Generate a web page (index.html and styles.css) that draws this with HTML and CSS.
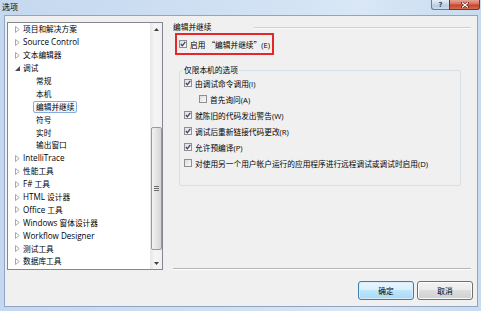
FILE: index.html
```html
<!DOCTYPE html>
<html lang="zh-CN">
<head>
<meta charset="utf-8">
<title>选项</title>
<link rel="stylesheet" href="styles.css">
</head>
<body>
<div class="window">
  <div class="titlebar">
    <span class="title">选项</span>
    <div class="caption">
      <div class="cbtn help">?</div>
      <div class="cbtn close">
        <svg width="8" height="6" viewBox="0 0 8 6"><path d="M1 0.5 L7 5.5 M7 0.5 L1 5.5" stroke="#5a1a12" stroke-width="2.4" stroke-linecap="square"/><path d="M1 0.5 L7 5.5 M7 0.5 L1 5.5" stroke="#fff" stroke-width="1.2"/></svg>
      </div>
    </div>
  </div>
  <div class="frame">
    <div class="client">
      <div class="main">
        <div class="tree">
          <ul class="items">
            <li class="row l0"><span class="tw"><svg width="5" height="7" viewBox="0 0 5 7"><path d="M0.5 0.5 L4.2 3.5 L0.5 6.5 Z" fill="#fff" stroke="#a8a8a8"/></svg></span><span class="lbl">项目和解决方案</span></li>
            <li class="row l0"><span class="tw"><svg width="5" height="7" viewBox="0 0 5 7"><path d="M0.5 0.5 L4.2 3.5 L0.5 6.5 Z" fill="#fff" stroke="#a8a8a8"/></svg></span><span class="lbl"><span class="en">Source Control</span></span></li>
            <li class="row l0"><span class="tw"><svg width="5" height="7" viewBox="0 0 5 7"><path d="M0.5 0.5 L4.2 3.5 L0.5 6.5 Z" fill="#fff" stroke="#a8a8a8"/></svg></span><span class="lbl">文本编辑器</span></li>
            <li class="row l0"><span class="tw"><svg width="5" height="5" viewBox="0 0 5 5"><path d="M5 0 L5 5 L0 5 Z" fill="#4a4a4a"/></svg></span><span class="lbl">调试</span></li>
            <li class="row l1"><span class="lbl">常规</span></li>
            <li class="row l1"><span class="lbl">本机</span></li>
            <li class="row l1"><span class="lbl sel">编辑并继续</span></li>
            <li class="row l1"><span class="lbl">符号</span></li>
            <li class="row l1"><span class="lbl">实时</span></li>
            <li class="row l1"><span class="lbl">输出窗口</span></li>
            <li class="row l0"><span class="tw"><svg width="5" height="7" viewBox="0 0 5 7"><path d="M0.5 0.5 L4.2 3.5 L0.5 6.5 Z" fill="#fff" stroke="#a8a8a8"/></svg></span><span class="lbl"><span class="en">IntelliTrace</span></span></li>
            <li class="row l0"><span class="tw"><svg width="5" height="7" viewBox="0 0 5 7"><path d="M0.5 0.5 L4.2 3.5 L0.5 6.5 Z" fill="#fff" stroke="#a8a8a8"/></svg></span><span class="lbl">性能工具</span></li>
            <li class="row l0"><span class="tw"><svg width="5" height="7" viewBox="0 0 5 7"><path d="M0.5 0.5 L4.2 3.5 L0.5 6.5 Z" fill="#fff" stroke="#a8a8a8"/></svg></span><span class="lbl"><span class="en">F# </span>工具</span></li>
            <li class="row l0"><span class="tw"><svg width="5" height="7" viewBox="0 0 5 7"><path d="M0.5 0.5 L4.2 3.5 L0.5 6.5 Z" fill="#fff" stroke="#a8a8a8"/></svg></span><span class="lbl"><span class="en">HTML </span>设计器</span></li>
            <li class="row l0"><span class="tw"><svg width="5" height="7" viewBox="0 0 5 7"><path d="M0.5 0.5 L4.2 3.5 L0.5 6.5 Z" fill="#fff" stroke="#a8a8a8"/></svg></span><span class="lbl"><span class="en">Office </span>工具</span></li>
            <li class="row l0"><span class="tw"><svg width="5" height="7" viewBox="0 0 5 7"><path d="M0.5 0.5 L4.2 3.5 L0.5 6.5 Z" fill="#fff" stroke="#a8a8a8"/></svg></span><span class="lbl"><span class="en">Windows </span>窗体设计器</span></li>
            <li class="row l0"><span class="tw"><svg width="5" height="7" viewBox="0 0 5 7"><path d="M0.5 0.5 L4.2 3.5 L0.5 6.5 Z" fill="#fff" stroke="#a8a8a8"/></svg></span><span class="lbl"><span class="en">Workflow Designer</span></span></li>
            <li class="row l0"><span class="tw"><svg width="5" height="7" viewBox="0 0 5 7"><path d="M0.5 0.5 L4.2 3.5 L0.5 6.5 Z" fill="#fff" stroke="#a8a8a8"/></svg></span><span class="lbl">测试工具</span></li>
            <li class="row l0"><span class="tw"><svg width="5" height="7" viewBox="0 0 5 7"><path d="M0.5 0.5 L4.2 3.5 L0.5 6.5 Z" fill="#fff" stroke="#a8a8a8"/></svg></span><span class="lbl">数据库工具</span></li>
          </ul>
          <div class="scrollbar">
            <div class="arrow"><svg width="5" height="3" viewBox="0 0 5 3"><path d="M2.5 0 L5 3 L0 3 Z" fill="#404040"/></svg></div>
            <div class="track">
              <div class="thumb">
                <span class="grip"></span><span class="grip"></span><span class="grip"></span>
              </div>
            </div>
            <div class="arrow"><svg width="5" height="3" viewBox="0 0 5 3"><path d="M0 0 L5 0 L2.5 3 Z" fill="#404040"/></svg></div>
          </div>
        </div>
        <div class="page">
          <div class="page-head">
            <span>编辑并继续</span>
            <div class="rule"></div>
          </div>
          <div class="highlight">
            <span class="cb"><svg width="6" height="6" viewBox="0 0 6 6"><path d="M0.8 3 L2.4 4.8 L5.3 0.9" fill="none" stroke="#33456e" stroke-width="1.3"/></svg></span>
            <span>启用 <span class="cjk">“编辑并继续”</span>(E)</span>
          </div>
          <fieldset class="group">
            <legend>仅限本机的选项</legend>
            <div class="opt"><span class="cb"><svg width="6" height="6" viewBox="0 0 6 6"><path d="M0.8 3 L2.4 4.8 L5.3 0.9" fill="none" stroke="#33456e" stroke-width="1.3"/></svg></span><span>由调试命令调用(I)</span></div>
            <div class="opt sub"><span class="cb"></span><span>首先询问(A)</span></div>
            <div class="opt"><span class="cb"><svg width="6" height="6" viewBox="0 0 6 6"><path d="M0.8 3 L2.4 4.8 L5.3 0.9" fill="none" stroke="#33456e" stroke-width="1.3"/></svg></span><span>就陈旧的代码发出警告(W)</span></div>
            <div class="opt"><span class="cb"><svg width="6" height="6" viewBox="0 0 6 6"><path d="M0.8 3 L2.4 4.8 L5.3 0.9" fill="none" stroke="#33456e" stroke-width="1.3"/></svg></span><span>调试后重新链接代码更改(R)</span></div>
            <div class="opt"><span class="cb"><svg width="6" height="6" viewBox="0 0 6 6"><path d="M0.8 3 L2.4 4.8 L5.3 0.9" fill="none" stroke="#33456e" stroke-width="1.3"/></svg></span><span>允许预编译(P)</span></div>
            <div class="opt"><span class="cb"></span><span>对使用另一个用户帐户运行的应用程序进行远程调试或调试时启用(D)</span></div>
          </fieldset>
        </div>
      </div>
      <div class="footer">
        <button class="btn default">确定</button>
        <button class="btn">取消</button>
      </div>
    </div>
  </div>
</div>
</body>
</html>
```

FILE: styles.css
```css
* { box-sizing: border-box; }
html, body { margin: 0; padding: 0; }
body {
  width: 481px;
  height: 311px;
  overflow: hidden;
  font-family: "Open Sans", "Noto Sans CJK SC", sans-serif;
  font-size: 7.7px;
  color: #000;
}
.en { font-size: 8.1px; }
.cjk { font-family: "Noto Sans CJK SC", sans-serif; }
.window {
  width: 481px;
  height: 311px;
  display: flex;
  flex-direction: column;
  background: linear-gradient(90deg, #c4d8ef 0%, #cfe0f3 45%, #d9e7f6 75%, #c8dbf0 100%);
}
.titlebar {
  height: 15px;
  display: flex;
  align-items: flex-start;
  padding: 0 1px 0 2px;
}
.title {
  font-size: 8px;
  line-height: 14px;
  color: #000;
}
.caption {
  margin-left: auto;
  display: flex;
}
.cbtn {
  height: 10px;
  display: flex;
  align-items: center;
  justify-content: center;
  border: 1px solid #6a7d98;
  border-top: none;
}
.help {
  width: 18px;
  border-radius: 0 0 0 3px;
  border-right: none;
  background: linear-gradient(#e4edf7, #c5d6ea 50%, #b4c8e0 51%, #cddcee);
  color: #3a4a63;
  font-size: 7px;
  font-weight: bold;
  font-family: "DejaVu Sans", sans-serif;
  line-height: 10px;
}
.close {
  width: 31px;
  border-color: #7b3126;
  border-radius: 0 0 3px 0;
  background: linear-gradient(#e7a393, #d5705b 45%, #c4432c 55%, #d76b4f);
}
.frame {
  flex: 1;
  display: flex;
  padding: 0 3px 4px 4px;
}
.client {
  flex: 1;
  display: flex;
  flex-direction: column;
  background: #f0f0f0;
  border: 1px solid #8fa5c1;
}
.main {
  display: flex;
  margin-top: 6px;
}
.tree {
  width: 156px;
  height: 248px;
  margin-left: 2px;
  border: 1px solid #828790;
  background: #fff;
  display: flex;
}
.items {
  list-style: none;
  margin: 0;
  padding: 0;
  flex: 1;
}
.row {
  height: 12.9px;
  display: flex;
  align-items: center;
  white-space: nowrap;
}
.row.l0 { padding-left: 7px; }
.row.l1 { padding-left: 25px; }
.tw {
  width: 8px;
  display: flex;
  align-items: center;
}
.tw svg { display: block; }
.lbl {
  line-height: 10px;
  border: 1px solid transparent;
  padding: 0 2px;
  margin-left: -3px;
}
.l1 .lbl { margin-left: 0; }
.lbl.sel {
  border-color: #84acdd;
  border-radius: 2px;
  background: linear-gradient(#fbfdff, #edf4fd);
}
.scrollbar {
  width: 12px;
  display: flex;
  flex-direction: column;
  background: linear-gradient(90deg, #e6e6e6, #f5f5f5 40%, #f1f1f1);
}
.arrow {
  height: 12px;
  display: flex;
  align-items: center;
  justify-content: center;
}
.track {
  flex: 1;
  padding-top: 92px;
  padding-left: 1px;
}
.thumb {
  height: 123px;
  border: 1px solid #9a9a9a;
  border-radius: 2px;
  background: linear-gradient(90deg, #f2f2f2, #e4e4e4 50%, #d4d4d4);
  display: flex;
  flex-direction: column;
  align-items: center;
  justify-content: center;
  gap: 1px;
}
.grip {
  width: 5px;
  height: 1px;
  background: #6b6b6b;
}
.page {
  width: 298px;
  height: 247px;
  margin-left: 10px;
  display: flex;
  flex-direction: column;
  border-bottom: 1px solid #b4b4b4;
  box-shadow: 0 1px 0 #fff;
}
.page-head {
  height: 11px;
  display: flex;
  align-items: center;
  line-height: 11px;
}
.rule {
  margin-left: auto;
  width: 217px;
  height: 2px;
  border-top: 1px solid #d0d0d0;
  border-bottom: 1px solid #fafafa;
}
.highlight {
  width: 99px;
  height: 22px;
  margin-left: 2px;
  border: 2px solid #e5262b;
  display: flex;
  align-items: center;
  padding-left: 2px;
  gap: 2px;
  white-space: nowrap;
}
.cb {
  width: 8px;
  height: 8px;
  flex: none;
  border: 1px solid #8f8f8f;
  background: linear-gradient(135deg, #dedede, #f9f9f9);
  display: flex;
  align-items: center;
  justify-content: center;
  margin-right: 1px;
}
.cb svg { display: block; }
.group {
  margin: 10px 0 0 6px;
  width: 282px;
  height: 121px;
  padding: 0 0 0 3px;
  border: 1px solid #d5dfe5;
  border-radius: 3px;
  min-width: 0;
}
.group legend {
  padding: 0 1px;
  line-height: 10px;
}
.opt {
  height: 16px;
  display: flex;
  align-items: center;
  gap: 2px;
  margin-left: 1px;
  white-space: nowrap;
}
.opt.sub { margin-left: 16px; }
.footer {
  display: flex;
  justify-content: flex-end;
  gap: 3px;
  padding-right: 4px;
  margin-top: 11px;
}
.btn {
  width: 56px;
  height: 19px;
  margin: 0;
  padding: 0;
  font-family: "Noto Sans CJK SC", sans-serif;
  font-size: 7.7px;
  color: #000;
  border: 1px solid #707070;
  border-radius: 3px;
  background: linear-gradient(#f2f2f2, #ebebeb 45%, #dddddd 50%, #cfcfcf);
  box-shadow: inset 0 0 0 1px #fcfcfc;
}
.btn.default {
  width: 56px;
  border-color: #3c7fb1;
  background: linear-gradient(#eaf6fd, #d9f0fc 45%, #bee6fd 50%, #a7d9f5);
  box-shadow: inset 0 0 0 1px #d6ecfa;
}
```
